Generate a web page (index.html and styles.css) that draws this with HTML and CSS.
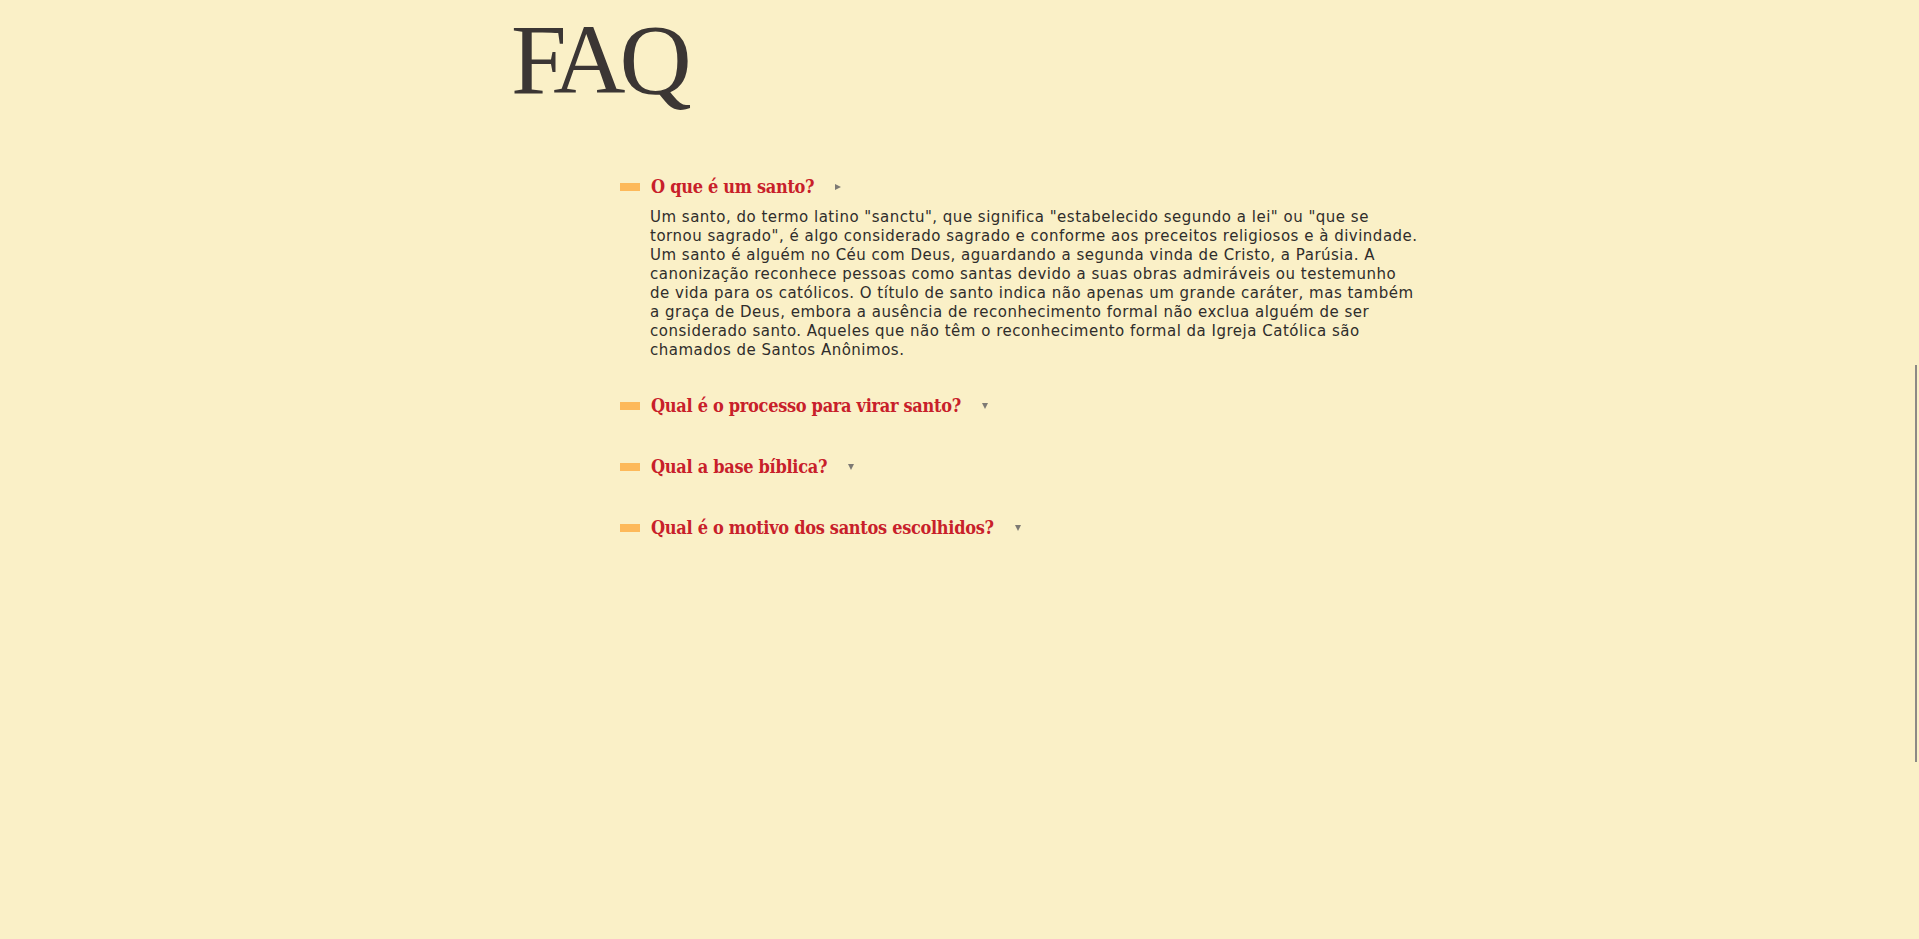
FILE: index.html
```html
<!DOCTYPE html>
<html lang="pt-BR">
<head>
<meta charset="utf-8">
<title>FAQ</title>
<link rel="stylesheet" href="styles.css">
</head>
<body>
<main class="page">
  <h1 class="title">FAQ</h1>
  <section class="faq">
    <div class="item open">
      <div class="question"><span class="bar"></span><span class="q-text">O que é um santo?</span><span class="arrow right"></span></div>
      <p class="answer">Um santo, do termo latino "sanctu", que significa "estabelecido segundo a lei" ou "que se tornou sagrado", é algo considerado sagrado e conforme aos preceitos religiosos e à divindade. Um santo é alguém no Céu com Deus, aguardando a segunda vinda de Cristo, a Parúsia. A canonização reconhece pessoas como santas devido a suas obras admiráveis ou testemunho de vida para os católicos. O título de santo indica não apenas um grande caráter, mas também a graça de Deus, embora a ausência de reconhecimento formal não exclua alguém de ser considerado santo. Aqueles que não têm o reconhecimento formal da Igreja Católica são chamados de Santos Anônimos.</p>
    </div>
    <div class="item">
      <div class="question"><span class="bar"></span><span class="q-text">Qual é o processo para virar santo?</span><span class="arrow down"></span></div>
    </div>
    <div class="item">
      <div class="question"><span class="bar"></span><span class="q-text">Qual a base bíblica?</span><span class="arrow down"></span></div>
    </div>
    <div class="item">
      <div class="question"><span class="bar"></span><span class="q-text">Qual é o motivo dos santos escolhidos?</span><span class="arrow down"></span></div>
    </div>
  </section>
</main>
<div class="scroll-thumb"></div>
</body>
</html>
```

FILE: styles.css
```css
html, body {
  margin: 0;
  padding: 0;
  background: #faf0c7;
  min-height: 100%;
}

.page {
  padding-left: 511px;
}

.title {
  margin: 10px 0 0 0;
  font-family: "Liberation Serif", "Times New Roman", serif;
  font-weight: 400;
  font-size: 100px;
  line-height: 100px;
  letter-spacing: -6px;
  color: #3b3634;
}

.faq {
  margin-top: 65px;
  padding-left: 109px;
  display: flex;
  flex-direction: column;
  gap: 37px;
}

.question {
  display: flex;
  align-items: center;
  height: 24px;
}

.bar {
  width: 20px;
  height: 8px;
  background: #fdb95a;
  margin-right: 11px;
  flex: none;
}

.q-text {
  font-family: "DejaVu Serif Condensed", "DejaVu Serif", serif;
  font-weight: 700;
  font-size: 18px;
  line-height: 24px;
  letter-spacing: -0.3px;
  color: #c8202a;
}

.arrow {
  margin-left: 21px;
  width: 0;
  height: 0;
  flex: none;
}

.arrow.right {
  border-top: 3.5px solid transparent;
  border-bottom: 3.5px solid transparent;
  border-left: 6px solid #7d7a74;
}

.arrow.down {
  border-left: 3.5px solid transparent;
  border-right: 3.5px solid transparent;
  border-top: 6px solid #7d7a74;
}

.answer {
  margin: 9px 0 -3px 30px;
  width: 770px;
  font-family: "DejaVu Sans", Verdana, sans-serif;
  font-size: 15px;
  line-height: 19px;
  letter-spacing: 0.5px;
  color: #2f2d2b;
}

.scroll-thumb {
  position: fixed;
  top: 365px;
  right: 2px;
  width: 2px;
  height: 397px;
  background: #8c8a86;
}
```
